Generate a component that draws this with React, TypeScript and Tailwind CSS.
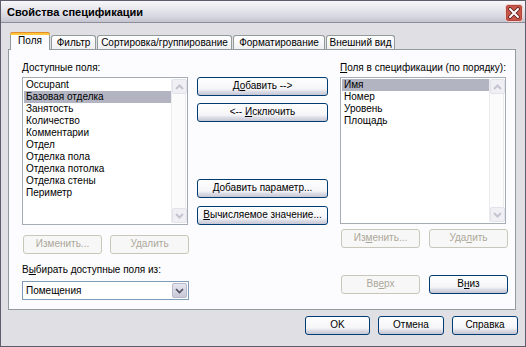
import React from "react";

type BtnProps = { w: string; children: React.ReactNode; disabled?: boolean };

function Btn({ w, children, disabled }: BtnProps) {
  return (
    <div
      className={
        disabled
          ? `${w} h-[19px] shrink-0 flex items-center justify-center rounded-[3px] border border-[#c9c7ba] bg-[#f7f7f7] text-[10px] leading-none whitespace-nowrap text-[#aca899]`
          : `${w} h-[19px] shrink-0 flex items-center justify-center rounded-[3px] border border-[#003c74] bg-[linear-gradient(to_bottom,#ffffff_0%,#f5f5f8_65%,#dcdce6_80%,#c6c6d4_100%)] text-[10px] leading-none whitespace-nowrap text-black`
      }
    >
      <span className="pb-[1px]">{children}</span>
    </div>
  );
}

function ArrowBox({ up }: { up?: boolean }) {
  return (
    <div className="w-[15px] h-[15px] rounded-[2px] border border-[#e2e2ea] bg-[#f0f0f4] flex items-center justify-center">
      <svg width="9" height="6" viewBox="0 0 9 6">
        {up ? (
          <polyline points="1,5 4.5,1.5 8,5" fill="none" stroke="#c4c4d0" strokeWidth="2" />
        ) : (
          <polyline points="1,1 4.5,4.5 8,1" fill="none" stroke="#c4c4d0" strokeWidth="2" />
        )}
      </svg>
    </div>
  );
}

function Scrollbar() {
  return (
    <div className="w-[15px] h-full flex flex-col justify-between border-l border-r border-[#ececf0] bg-[#fbfbfc]">
      <ArrowBox up />
      <ArrowBox />
    </div>
  );
}

function ListBox({ items, selected, w, h }: { items: string[]; selected: number; w: string; h: string }) {
  return (
    <div className={`${w} ${h} border border-[#a5acb5] bg-white flex p-[1px]`}>
      <div className="flex-1 flex flex-col">
        {items.map((it, i) => (
          <div
            key={it}
            className={
              i === selected
                ? "h-[12px] leading-[12px] pl-[2px] text-[10px] whitespace-nowrap bg-[#b3b4c2] text-black"
                : "h-[12px] leading-[12px] pl-[2px] text-[10px] whitespace-nowrap text-black"
            }
          >
            {it}
          </div>
        ))}
      </div>
      <Scrollbar />
    </div>
  );
}

export default function App() {
  const leftItems = [
    "Occupant",
    "Базовая отделка",
    "Занятость",
    "Количество",
    "Комментарии",
    "Отдел",
    "Отделка пола",
    "Отделка потолка",
    "Отделка стены",
    "Периметр",
  ];
  const rightItems = ["Имя", "Номер", "Уровень", "Площадь"];

  return (
    <div className="w-[526px] h-[347px] border border-[#5d5d6c] bg-[#e0dfe3] flex flex-col [font-family:'Liberation_Sans',Arial,sans-serif] text-black overflow-hidden">
      {/* Title bar */}
      <div className="h-[22px] shrink-0 flex items-start justify-between bg-[linear-gradient(to_bottom,#f8f8fb_0%,#e6e6ec_40%,#d6d6e0_75%,#c4c4d0_100%)] border-b border-[#8d8d9c]">
        <div className="pl-[6px] pt-[5px] text-[11px] font-bold leading-[13px] whitespace-nowrap">Свойства спецификации</div>
        <div className="mt-[3px] mr-[2px] w-[18px] h-[18px]">
          <svg width="18" height="18" viewBox="0 0 18 18">
            <rect x="0.5" y="0.5" width="17" height="17" rx="3" fill="#c9564a" stroke="#f3d6d0" />
            <rect x="1.5" y="1.5" width="15" height="15" rx="2" fill="none" stroke="#b0433a" strokeWidth="0.8" />
            <path d="M5 5 L13 13 M13 5 L5 13" stroke="#5a1f1a" strokeWidth="3.6" strokeLinecap="round" />
            <path d="M5 5 L13 13 M13 5 L5 13" stroke="#ffffff" strokeWidth="2" strokeLinecap="round" />
          </svg>
        </div>
      </div>

      {/* Body */}
      <div className="flex-1 flex flex-col px-[7px] pt-[9px]">
        {/* Tabs */}
        <div className="h-[18px] flex items-end pl-[2px] relative z-10 -mb-px text-[10px] whitespace-nowrap">
          <div className="relative w-[40px] h-[18px] bg-[#fcfcfe] border border-b-0 border-[#919b9c] rounded-t-[3px] flex items-center justify-center pb-[1px] leading-none">
            <div className="absolute -top-px -left-px -right-px h-[3px] rounded-t-[3px] bg-[#ffc83c] border-t border-[#e68b2c]" />
            Поля
          </div>
          <div className="ml-[1px] mb-[1px] w-[45px] h-[14px] bg-[linear-gradient(to_bottom,#ffffff,#f0f0f3)] border border-b-0 border-[#919b9c] rounded-t-[3px] flex items-center justify-center leading-none">Фильтр</div>
          <div className="ml-[1px] mb-[1px] w-[135px] h-[14px] bg-[linear-gradient(to_bottom,#ffffff,#f0f0f3)] border border-b-0 border-[#919b9c] rounded-t-[3px] flex items-center justify-center leading-none">Сортировка/группирование</div>
          <div className="ml-[1px] mb-[1px] w-[92px] h-[14px] bg-[linear-gradient(to_bottom,#ffffff,#f0f0f3)] border border-b-0 border-[#919b9c] rounded-t-[3px] flex items-center justify-center leading-none">Форматирование</div>
          <div className="ml-[1px] mb-[1px] w-[69px] h-[14px] bg-[linear-gradient(to_bottom,#ffffff,#f0f0f3)] border border-b-0 border-[#919b9c] rounded-t-[3px] flex items-center justify-center leading-none">Внешний вид</div>
        </div>

        {/* Panel */}
        <div className="w-[508px] h-[261px] border border-[#919b9c] bg-[#fcfcfe] flex text-[10px] whitespace-nowrap">
          {/* Left column */}
          <div className="ml-[13px] w-[167px] flex flex-col">
            <div className="mt-[12px] h-[12px] leading-[12px]">
              <u className="underline-offset-[1px]">Д</u>оступные поля:
            </div>
            <div className="mt-[3px]">
              <ListBox items={leftItems} selected={1} w="w-[166px]" h="h-[148px]" />
            </div>
            <div className="mt-[10px] ml-[1px] flex gap-[8px]">
              <Btn w="w-[79px]" disabled>Изменить...</Btn>
              <Btn w="w-[79px]" disabled>Удалить</Btn>
            </div>
            <div className="mt-[10px] h-[12px] leading-[12px]">
              В<u className="underline-offset-[1px]">ы</u>бирать доступные поля из:
            </div>
            <div className="mt-[5px] w-[167px] h-[19px] border border-[#7f9db9] bg-white flex items-center">
              <div className="flex-1 pl-[3px] leading-none">Помещения</div>
              <div className="w-[15px] h-[15px] mr-[1px] rounded-[2px] border border-[#b8b8c8] bg-[linear-gradient(to_bottom,#e6e6ee,#c8c8d8)] flex items-center justify-center">
                <svg width="9" height="6" viewBox="0 0 9 6">
                  <polyline points="1,1 4.5,4.5 8,1" fill="none" stroke="#4d4d5c" strokeWidth="1.6" />
                </svg>
              </div>
            </div>
          </div>

          {/* Middle column */}
          <div className="ml-[8px] w-[131px] flex flex-col">
            <div className="mt-[27px]">
              <Btn w="w-[131px]">Д<u className="underline-offset-[1px]">о</u>бавить --&gt;</Btn>
            </div>
            <div className="mt-[7px]">
              <Btn w="w-[131px]">&lt;-- <u className="underline-offset-[1px]">И</u>сключить</Btn>
            </div>
            <div className="mt-[57px]">
              <Btn w="w-[131px]"><u className="underline-offset-[1px]">Д</u>обавить параметр...</Btn>
            </div>
            <div className="mt-[8px]">
              <Btn w="w-[131px]"><u className="underline-offset-[1px]">В</u>ычисляемое значение...</Btn>
            </div>
          </div>

          {/* Right column */}
          <div className="ml-[12px] w-[168px] flex flex-col">
            <div className="mt-[12px] h-[12px] leading-[12px]">
              <u className="underline-offset-[1px]">П</u>оля в спецификации (по порядку):
            </div>
            <div className="mt-[3px]">
              <ListBox items={rightItems} selected={0} w="w-[166px]" h="h-[147px]" />
            </div>
            <div className="mt-[5px] ml-[1px] flex gap-[9px]">
              <Btn w="w-[79px]" disabled>Из<u className="underline-offset-[1px]">м</u>енить...</Btn>
              <Btn w="w-[79px]" disabled>Уда<u className="underline-offset-[1px]">л</u>ить</Btn>
            </div>
            <div className="mt-[27px] ml-[1px] flex gap-[9px]">
              <Btn w="w-[79px]" disabled>Вв<u className="underline-offset-[1px]">е</u>рх</Btn>
              <Btn w="w-[79px]">В<u className="underline-offset-[1px]">н</u>из</Btn>
            </div>
          </div>
        </div>

        {/* Bottom buttons */}
        <div className="mt-[6px] flex justify-end gap-[8px]">
          <Btn w="w-[65px]">OK</Btn>
          <Btn w="w-[66px]">Отмена</Btn>
          <Btn w="w-[66px]">Справка</Btn>
        </div>
      </div>
    </div>
  );
}
